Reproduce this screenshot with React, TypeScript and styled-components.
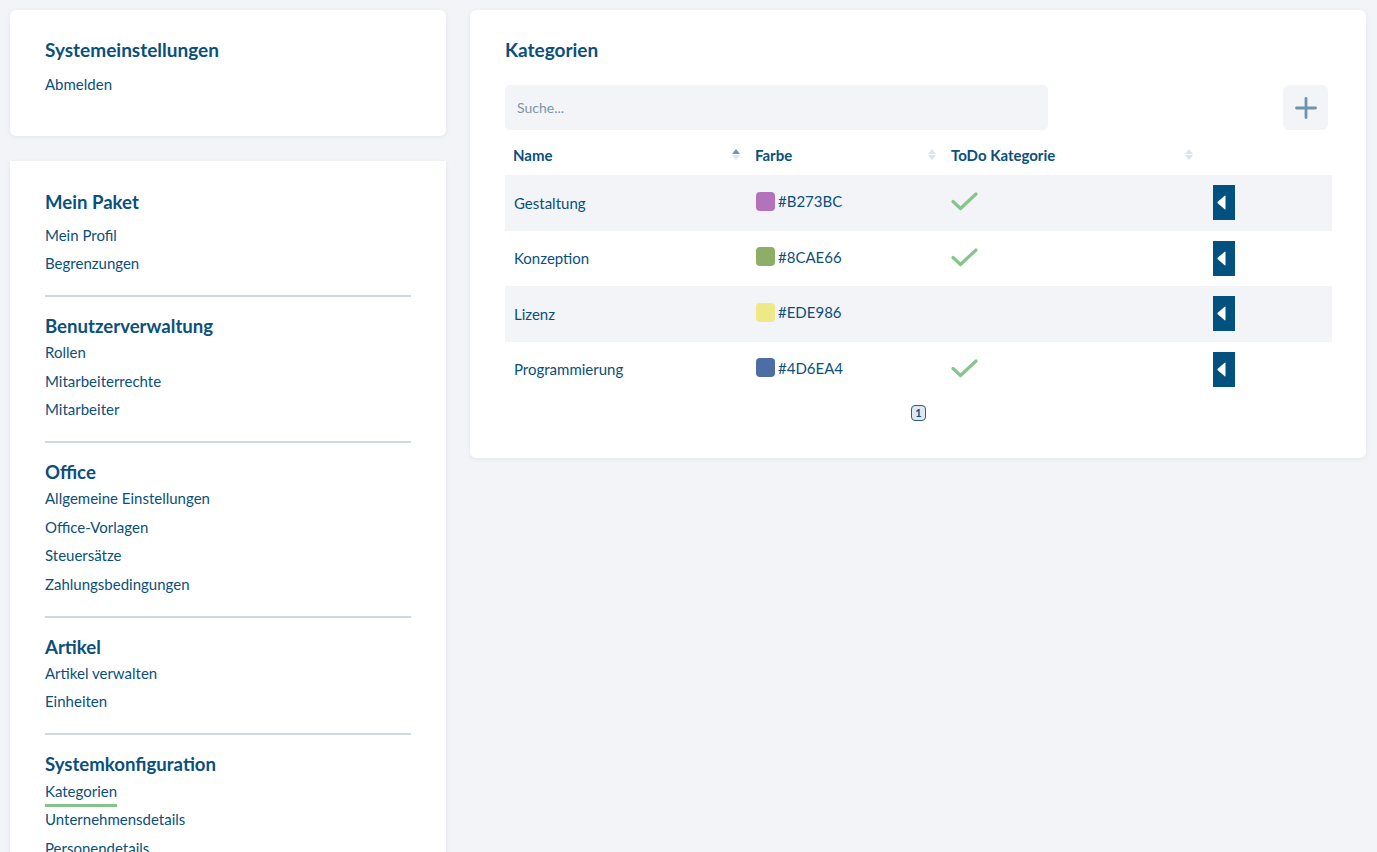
import React from 'react';
import styled, {createGlobalStyle} from 'styled-components';

const GlobalStyle = createGlobalStyle`
  html, body {
    margin: 0;
    padding: 0;
    background: #f2f4f8;
    font-family: Lato, "Open Sans", Arial, sans-serif;
    color: #0b4f7c;
  }
  * { box-sizing: border-box; }
`

const Page = styled.div`
  display: flex;
  align-items: flex-start;
  gap: 24px;
  padding: 10px 11px 0 10px;
  height: 852px;
  overflow: hidden;
`

const Sidebar = styled.div`
  width: 436px;
  flex-shrink: 0;
  display: flex;
  flex-direction: column;
  gap: 25px;
`

const Panel = styled.div<{rounded?: boolean}>`
  background: #fff;
  border-radius: ${props => props.rounded ? "6px" : "0"};
  box-shadow: 0 1px 4px rgba(20, 50, 80, 0.08);
`

const SettingsPanel = styled(Panel)`
  height: 126px;
  padding: 29px 35px 0;
`

const MenuPanel = styled(Panel)`
  padding: 29px 35px 40px;
  min-height: 720px;
`

const PanelTitle = styled.h2`
  margin: 0;
  font-size: 19px;
  line-height: 22px;
  font-weight: 700;
`

// the link's top margin collapses into this one
const SectionTitle = styled.h3<{first?: boolean}>`
  margin: 0 0 ${props => props.first ? "10.5px" : "-4px"};
  font-size: 18.6px;
  line-height: 24px;
  font-weight: 700;
`

const MenuLink = styled.a<{active?: boolean, spaced?: boolean}>`
  display: block;
  margin-top: ${props => props.spaced ? "13px" : "8.4px"};
  font-size: 15px;
  line-height: 20px;
  color: #0b4f7c;
  text-decoration: ${props => props.active ? "underline" : "none"};
  text-decoration-color: #86c28b;
  text-decoration-thickness: 3px;
  text-underline-offset: 7px;
  cursor: pointer;
`

const Divider = styled.hr`
  border: none;
  border-top: 2px solid #cfd9e2;
  margin: 22px 0 17px;
`

const Card = styled(Panel)`
  width: 896px;
  padding: 29px 34px 37px 35px;
`

const Toolbar = styled.div`
  display: flex;
  justify-content: space-between;
  margin: 24px 4px 0 0;
`

const SearchInput = styled.input`
  width: 543px;
  height: 45px;
  border: none;
  border-radius: 5px;
  background: #f2f4f8;
  padding: 0 12px;
  font-family: inherit;
  font-size: 14px;
  color: #0b4f7c;
  outline: none;
  &::placeholder { color: #7b95a9; }
`

const AddButton = styled.button`
  width: 45px;
  height: 45px;
  border: none;
  border-radius: 6px;
  background: #f2f4f8;
  display: flex;
  align-items: center;
  justify-content: center;
  padding: 0;
  cursor: pointer;
`

const Table = styled.table`
  width: 100%;
  margin-top: 10px;
  border-collapse: collapse;
  table-layout: fixed;
  font-size: 15px;
`

const HeadCell = styled.th<{width: number}>`
  width: ${props => props.width}px;
  height: 35px;
  padding: 0 7px 5px 8px;
  text-align: left;
  font-weight: 700;
  vertical-align: middle;
`

const HeadInner = styled.div`
  display: flex;
  align-items: center;
  justify-content: space-between;
`

const SortArrows = styled.span`
  display: flex;
  flex-direction: column;
  gap: 1px;
  margin-top: -2px;
`

const Row = styled.tr<{striped: boolean}>`
  height: 55.5px;
  background: ${props => props.striped ? "#f2f4f8" : "transparent"};
`

const Cell = styled.td<{pad?: number}>`
  padding: 0 8px 0 ${props => props.pad ?? 9}px;
  vertical-align: middle;
`

const ColourValue = styled.span`
  display: inline-flex;
  align-items: center;
  gap: 3px;
`

const Swatch = styled.span<{colour: string}>`
  width: 19px;
  height: 19px;
  border-radius: 4px;
  background: ${props => props.colour};
`

const RowButton = styled.button`
  width: 22px;
  height: 35px;
  border: none;
  background: #02517f;
  padding: 0 0 0 4px;
  display: flex;
  align-items: center;
  cursor: pointer;
`

const Pagination = styled.div`
  display: flex;
  justify-content: center;
  margin-top: 8px;
`

const PageBadge = styled.span`
  min-width: 15px;
  height: 16px;
  border: 1.5px solid #2d5f86;
  border-radius: 4px;
  background: #dfe7ef;
  font-size: 11px;
  font-weight: 700;
  line-height: 13px;
  text-align: center;
`

type Category = {
    name: string
    colour: string
    todo: boolean
}

const categories: Category[] = [
    {name: "Gestaltung", colour: "#B273BC", todo: true},
    {name: "Konzeption", colour: "#8CAE66", todo: true},
    {name: "Lizenz", colour: "#EDE986", todo: false},
    {name: "Programmierung", colour: "#4D6EA4", todo: true},
]

const menu: {title: string, links: string[]}[] = [
    {title: "Mein Paket", links: ["Mein Profil", "Begrenzungen"]},
    {title: "Benutzerverwaltung", links: ["Rollen", "Mitarbeiterrechte", "Mitarbeiter"]},
    {title: "Office", links: ["Allgemeine Einstellungen", "Office-Vorlagen", "Steuersätze", "Zahlungsbedingungen"]},
    {title: "Artikel", links: ["Artikel verwalten", "Einheiten"]},
    {title: "Systemkonfiguration", links: ["Kategorien", "Unternehmensdetails", "Personendetails", "Benachrichtigungen"]},
]

const Sorter = ({active}: {active?: boolean}) =>
    <SortArrows>
        <svg width="8" height="5" viewBox="0 0 8 5"><path d="M4 0 L8 5 H0 Z" fill={active ? "#6f95b3" : "#dbe4ed"}/></svg>
        <svg width="8" height="5" viewBox="0 0 8 5"><path d="M0 0 H8 L4 5 Z" fill="#dbe4ed"/></svg>
    </SortArrows>

const Check = () =>
    <svg width="27" height="20" viewBox="0 0 27 20">
        <path d="M2 10.5 L9.5 17.5 L25 3" fill="none" stroke="#88c48c" strokeWidth="3.2" strokeLinecap="round" strokeLinejoin="round"/>
    </svg>

const Caret = () =>
    <svg width="9" height="15" viewBox="0 0 9 15">
        <path d="M8.5 1 V14 Q8.5 15 7.7 14.3 L0.7 8.3 Q0 7.5 0.7 6.7 L7.7 0.7 Q8.5 0 8.5 1 Z" fill="#fff"/>
    </svg>

const Plus = () =>
    <svg width="22" height="22" viewBox="0 0 22 22">
        <path d="M11 1.5 V20.5 M1.5 11 H20.5" stroke="#6f93aa" strokeWidth="2.8" strokeLinecap="round"/>
    </svg>

const App = () => {
    return (
        <>
            <GlobalStyle/>
            <Page>
                <Sidebar>
                    <SettingsPanel rounded>
                        <PanelTitle>Systemeinstellungen</PanelTitle>
                        <MenuLink spaced>Abmelden</MenuLink>
                    </SettingsPanel>
                    <MenuPanel>
                        {menu.map((section, i) =>
                            <div key={section.title}>
                                {i > 0 && <Divider/>}
                                <SectionTitle first={i === 0}>{section.title}</SectionTitle>
                                {section.links.map(link =>
                                    <MenuLink key={link} active={link === "Kategorien"}>{link}</MenuLink>)}
                            </div>)}
                    </MenuPanel>
                </Sidebar>
                <Card rounded>
                    <PanelTitle>Kategorien</PanelTitle>
                    <Toolbar>
                        <SearchInput placeholder="Suche..."/>
                        <AddButton><Plus/></AddButton>
                    </Toolbar>
                    <Table>
                        <thead>
                        <tr>
                            <HeadCell width={242}><HeadInner>Name<Sorter active/></HeadInner></HeadCell>
                            <HeadCell width={196}><HeadInner>Farbe<Sorter/></HeadInner></HeadCell>
                            <HeadCell width={257}><HeadInner>ToDo Kategorie<Sorter/></HeadInner></HeadCell>
                            <HeadCell width={132}/>
                        </tr>
                        </thead>
                        <tbody>
                        {categories.map((item, i) =>
                            <Row key={item.name} striped={i % 2 === 0}>
                                <Cell>{item.name}</Cell>
                                <Cell pad={9}>
                                    <ColourValue><Swatch colour={item.colour}/>{item.colour}</ColourValue>
                                </Cell>
                                <Cell pad={8}>{item.todo && <Check/>}</Cell>
                                <Cell pad={13}><RowButton><Caret/></RowButton></Cell>
                            </Row>)}
                        </tbody>
                    </Table>
                    <Pagination><PageBadge>1</PageBadge></Pagination>
                </Card>
            </Page>
        </>
    );
};

export default App;
